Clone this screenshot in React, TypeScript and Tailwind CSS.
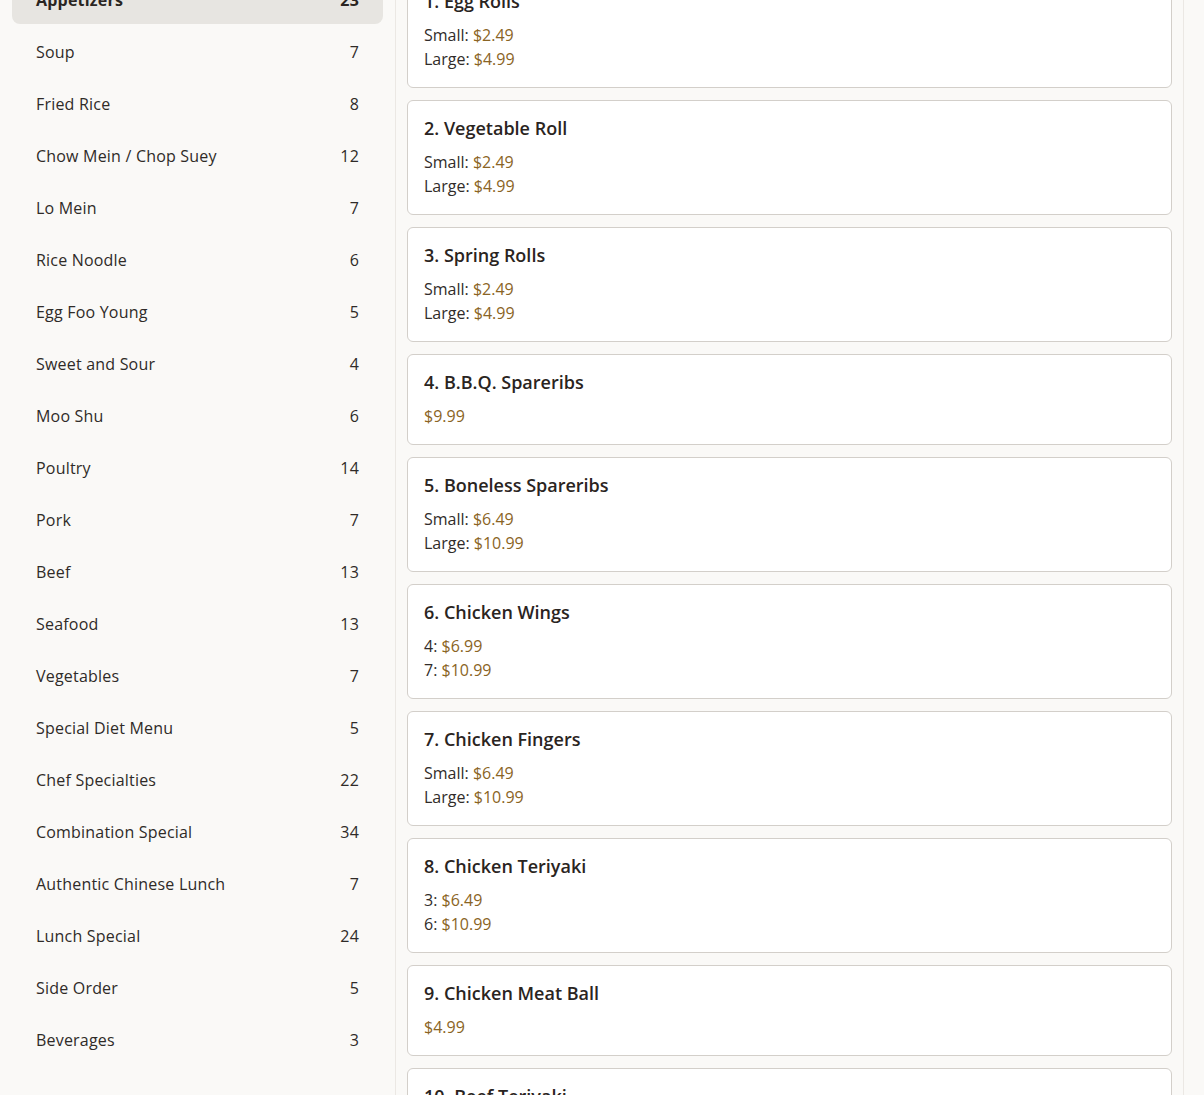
import React from 'react'

type Price = { label?: string; amount: string }
type Item = { name: string; prices: Price[] }

const categories: [string, number][] = [
  ['Appetizers', 23],
  ['Soup', 7],
  ['Fried Rice', 8],
  ['Chow Mein / Chop Suey', 12],
  ['Lo Mein', 7],
  ['Rice Noodle', 6],
  ['Egg Foo Young', 5],
  ['Sweet and Sour', 4],
  ['Moo Shu', 6],
  ['Poultry', 14],
  ['Pork', 7],
  ['Beef', 13],
  ['Seafood', 13],
  ['Vegetables', 7],
  ['Special Diet Menu', 5],
  ['Chef Specialties', 22],
  ['Combination Special', 34],
  ['Authentic Chinese Lunch', 7],
  ['Lunch Special', 24],
  ['Side Order', 5],
  ['Beverages', 3],
]

const sizes = (s: string, l: string): Price[] => [
  { label: 'Small', amount: s },
  { label: 'Large', amount: l },
]

const items: Item[] = [
  { name: '1. Egg Rolls', prices: sizes('$2.49', '$4.99') },
  { name: '2. Vegetable Roll', prices: sizes('$2.49', '$4.99') },
  { name: '3. Spring Rolls', prices: sizes('$2.49', '$4.99') },
  { name: '4. B.B.Q. Spareribs', prices: [{ amount: '$9.99' }] },
  { name: '5. Boneless Spareribs', prices: sizes('$6.49', '$10.99') },
  {
    name: '6. Chicken Wings',
    prices: [
      { label: '4', amount: '$6.99' },
      { label: '7', amount: '$10.99' },
    ],
  },
  { name: '7. Chicken Fingers', prices: sizes('$6.49', '$10.99') },
  {
    name: '8. Chicken Teriyaki',
    prices: [
      { label: '3', amount: '$6.49' },
      { label: '6', amount: '$10.99' },
    ],
  },
  { name: '9. Chicken Meat Ball', prices: [{ amount: '$4.99' }] },
  { name: '10. Beef Teriyaki', prices: sizes('$6.49', '$10.99') },
]

function CategoryNav() {
  return (
    <aside className="w-[395px] shrink-0 flex flex-col gap-1 px-3 pt-[3px]">
      {categories.map(([name, count], i) => (
        <button
          key={name}
          className={`flex items-center justify-between px-6 py-3 rounded-lg text-left text-base leading-6 tracking-[0.2px] ${
            i === 0 ? 'bg-[#e7e5e1] font-bold text-[#2a2522]' : 'text-[#2f2b28]'
          }`}
        >
          <span>{name}</span>
          <span>{count}</span>
        </button>
      ))}
    </aside>
  )
}

function MenuCard({ item }: { item: Item }) {
  return (
    <div className="bg-white border border-[#d3cfca] rounded-md p-4">
      <h3 className="text-lg leading-[22px] font-semibold text-[#2a2421] mb-[11px]">{item.name}</h3>
      <div className="text-base leading-6">
        {item.prices.map((p, i) => (
          <div key={i} className="text-[#312c29]">
            {p.label && <span>{p.label}: </span>}
            <span className="text-[#8a6424]">{p.amount}</span>
          </div>
        ))}
      </div>
    </div>
  )
}

export default function App() {
  return (
    <div
      className="h-[1095px] overflow-hidden bg-[#faf9f7]"
      style={{ fontFamily: '"Open Sans", "Noto Sans", sans-serif' }}
    >
      <div className="flex -mt-[27px]">
        <CategoryNav />
        <main className="w-[789px] border-l border-r border-[#ebe8e4] pl-[11px] pr-[11px] flex flex-col gap-3">
          {items.map((item) => (
            <MenuCard key={item.name} item={item} />
          ))}
        </main>
      </div>
    </div>
  )
}
